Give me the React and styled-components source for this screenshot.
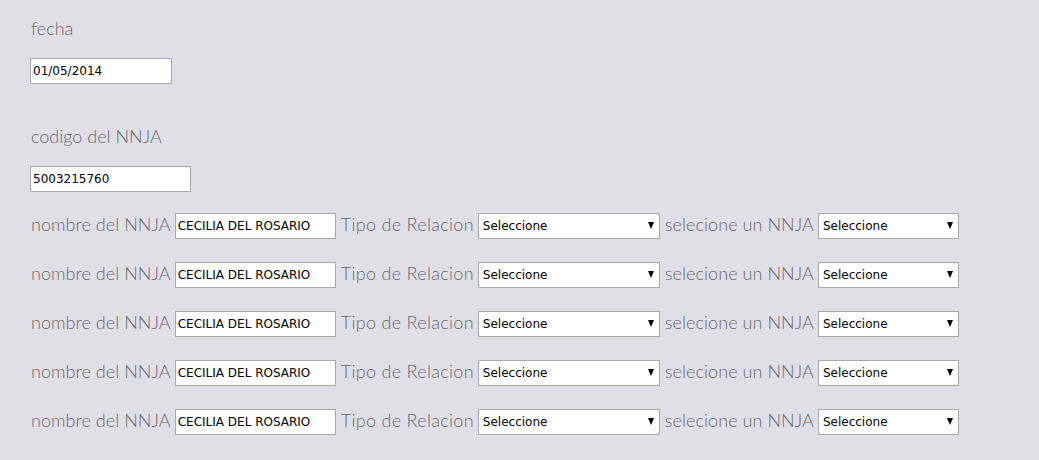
import React from 'react'
import styled, { createGlobalStyle } from 'styled-components'

const GlobalStyle = createGlobalStyle`
  body {
    margin: 0;
    background: #e0dfe8;
    font-family: Lato, "Open Sans", sans-serif;
  }
`

const Page = styled.div`
  padding: 16px 0 0 30px;
  min-height: 460px;
  box-sizing: border-box;
`

const Field = styled.div`
  display: flex;
  flex-direction: column;
  align-items: flex-start;
  margin-bottom: ${p => p.$gap || 0}px;
`

const Label = styled.span`
  font-size: 18px;
  font-weight: 300;
  color: #68686b;
  line-height: 24px;
  white-space: nowrap;
  padding-left: 1px;
`

const RowLabel = styled(Label)`
  margin-bottom: 4px;
  letter-spacing: ${p => p.$ls || 0}px;
`

const TextInput = styled.input`
  box-sizing: border-box;
  width: ${p => p.$w}px;
  height: 26px;
  margin-top: ${p => p.$top || 0}px;
  padding: 0 2px;
  border: 1px solid #a9a9a9;
  background: #fff;
  font-family: "DejaVu Sans", Verdana, sans-serif;
  font-size: 12px;
  color: #000;
  outline: none;
`

const Row = styled.div`
  display: flex;
  align-items: center;
  gap: 4px;
  height: 26px;
  margin-bottom: 23px;
`

const SelectWrap = styled.div`
  position: relative;
  width: ${p => p.$w}px;
  height: 26px;
`

const Select = styled.select`
  appearance: none;
  box-sizing: border-box;
  width: 100%;
  height: 100%;
  padding: 0 4px;
  border: 1px solid #a9a9a9;
  background: #fff;
  font-family: "DejaVu Sans", Verdana, sans-serif;
  font-size: 12px;
  color: #000;
  outline: none;
`

const Arrow = styled.span`
  position: absolute;
  right: 6px;
  top: 9px;
  width: 0;
  height: 0;
  border-left: 3.5px solid transparent;
  border-right: 3.5px solid transparent;
  border-top: 7px solid #000;
  pointer-events: none;
`

const Dropdown = ({ w }) => (
  <SelectWrap $w={w}>
    <Select defaultValue="">
      <option value="">Seleccione</option>
    </Select>
    <Arrow />
  </SelectWrap>
)

const RelationRow = () => (
  <Row>
    <RowLabel $ls={0.05}>nombre del NNJA</RowLabel>
    <TextInput $w={161} defaultValue="CECILIA DEL ROSARIO" />
    <RowLabel $ls={0.3}>Tipo de Relacion</RowLabel>
    <Dropdown w={182} />
    <RowLabel $ls={0.06}>selecione un NNJA</RowLabel>
    <Dropdown w={141} />
  </Row>
)

export default function App() {
  return (
    <Page>
      <GlobalStyle />
      <Field $gap={40}>
        <Label>fecha</Label>
        <TextInput $w={142} $top={18} defaultValue="01/05/2014" />
      </Field>
      <Field $gap={21}>
        <Label>codigo del NNJA</Label>
        <TextInput $w={161} $top={18} defaultValue="5003215760" />
      </Field>
      {[0, 1, 2, 3, 4].map(i => (
        <RelationRow key={i} />
      ))}
    </Page>
  )
}
